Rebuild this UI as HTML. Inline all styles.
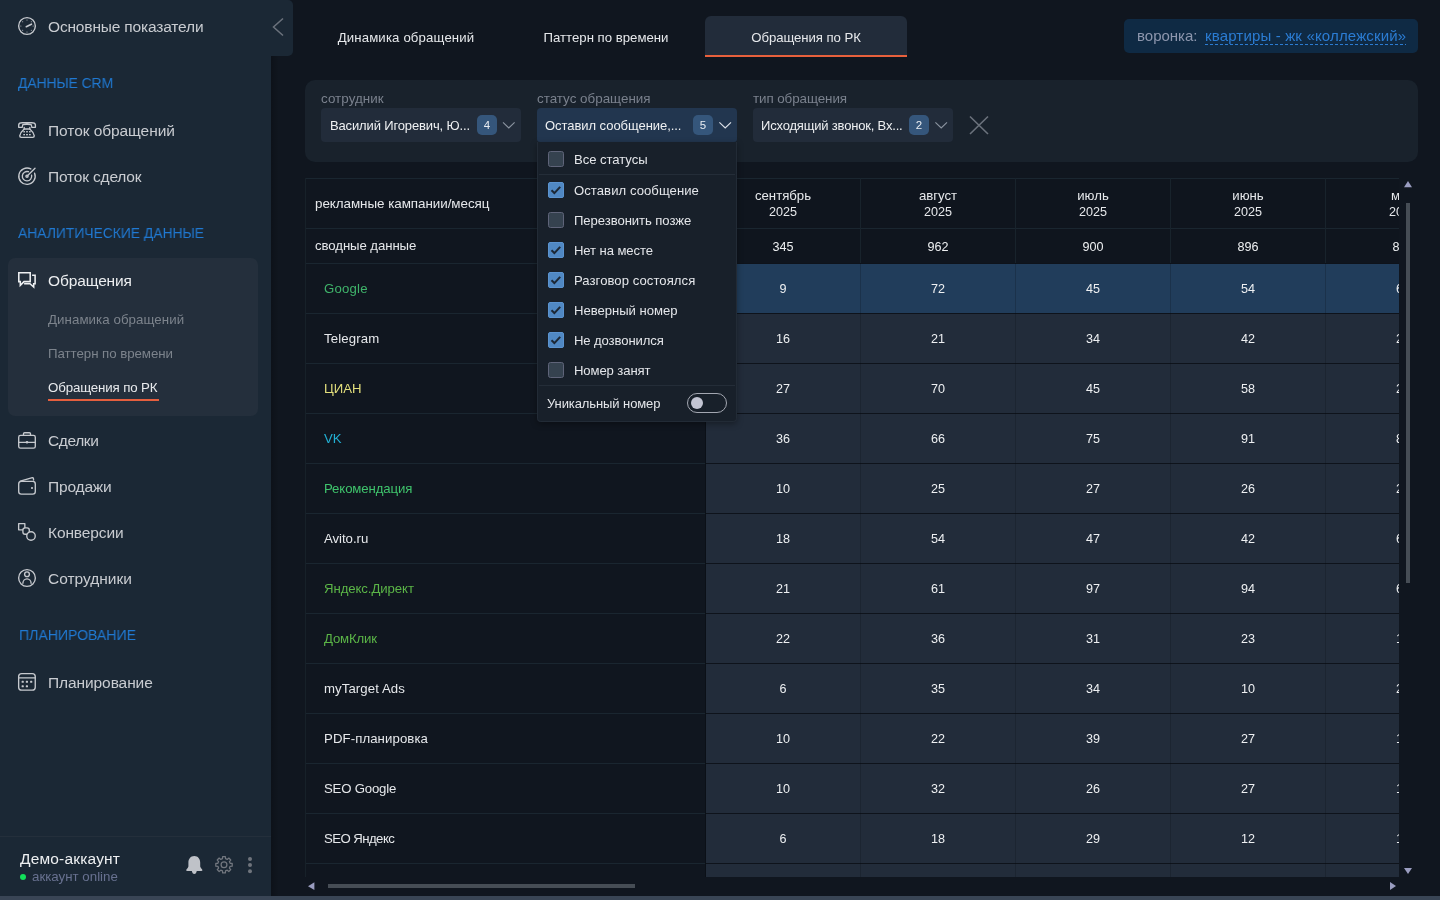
<!DOCTYPE html>
<html><head><meta charset="utf-8"><title>Обращения по РК</title>
<style>
html,body{margin:0;padding:0;}
body{width:1440px;height:900px;overflow:hidden;background:#10161f;font-family:"Liberation Sans", sans-serif;position:relative;}
.t{position:absolute;white-space:nowrap;line-height:1;will-change:transform;}
.r{position:absolute;}
</style></head><body>
<div class="r" style="left:0px;top:0px;width:271px;height:900px;background:#1b2835;"></div>
<div class="r" style="left:0px;top:0px;width:293px;height:56px;background:#1b2835;border-radius:0 5px 5px 0;"></div>
<div class="r" style="left:0px;top:836px;width:271px;height:1px;background:#242f3b;"></div>
<div class="r" style="left:271px;top:56px;width:8px;height:844px;background:linear-gradient(to right, rgba(0,0,0,0.2), rgba(0,0,0,0));"></div>
<div class="t" style="left:48.00px;top:19px;font-size:15.5px;color:#c9ccd1;letter-spacing:-0.167px;">Основные показатели</div>
<div class="t" style="left:18.00px;top:75px;font-size:15px;color:#2079d2;transform:scaleX(0.919);transform-origin:0 0;">ДАННЫЕ CRM</div>
<div class="t" style="left:48.00px;top:123px;font-size:15.5px;color:#c9ccd1;letter-spacing:-0.071px;">Поток обращений</div>
<div class="t" style="left:48.00px;top:169px;font-size:15.5px;color:#c9ccd1;letter-spacing:-0.182px;">Поток сделок</div>
<div class="t" style="left:18.00px;top:225px;font-size:15px;color:#2079d2;transform:scaleX(0.924);transform-origin:0 0;">АНАЛИТИЧЕСКИЕ ДАННЫЕ</div>
<div class="r" style="left:8px;top:258px;width:250px;height:158px;background:#242f3c;border-radius:7px;"></div>
<div class="t" style="left:48.00px;top:273px;font-size:15.5px;color:#eceef0;letter-spacing:-0.125px;">Обращения</div>
<div class="t" style="left:48.00px;top:313px;font-size:13.3px;color:#7c838c;letter-spacing:0.059px;">Динамика обращений</div>
<div class="t" style="left:48.00px;top:347px;font-size:13.3px;color:#7c838c;letter-spacing:-0.059px;">Паттерн по времени</div>
<div class="t" style="left:48.00px;top:381px;font-size:13.3px;color:#e8eaed;letter-spacing:-0.143px;">Обращения по РК</div>
<div class="r" style="left:48px;top:399px;width:111px;height:1.5px;background:#e65f3e;"></div>
<div class="t" style="left:48.00px;top:433px;font-size:15.5px;color:#c9ccd1;letter-spacing:-0.4px;">Сделки</div>
<div class="t" style="left:48.00px;top:479px;font-size:15.5px;color:#c9ccd1;letter-spacing:-0.167px;">Продажи</div>
<div class="t" style="left:48.00px;top:525px;font-size:15.5px;color:#c9ccd1;letter-spacing:-0.125px;">Конверсии</div>
<div class="t" style="left:48.00px;top:571px;font-size:15.5px;color:#c9ccd1;">Сотрудники</div>
<div class="t" style="left:18.50px;top:627px;font-size:15px;color:#2079d2;transform:scaleX(0.938);transform-origin:0 0;">ПЛАНИРОВАНИЕ</div>
<div class="t" style="left:48.00px;top:675px;font-size:15.5px;color:#c9ccd1;letter-spacing:-0.091px;">Планирование</div>
<div class="t" style="left:19.50px;top:851px;font-size:15.5px;color:#eef0f2;letter-spacing:0.182px;">Демо-аккаунт</div>
<div class="t" style="left:32.00px;top:870px;font-size:13.3px;color:#687190;">аккаунт online</div>
<div class="r" style="left:19.8px;top:873.8px;width:6.4px;height:6.4px;border-radius:50%;background:#12e05a;"></div>
<svg class="r" style="left:0;top:0" width="300" height="900" viewBox="0 0 300 900">
<g fill="none" stroke="#c6c9ce" stroke-width="1.35" stroke-linecap="round" stroke-linejoin="round">
 <circle cx="27" cy="26" r="8.35"/>
 <path d="M26.3 26.7 L31.4 24.2" stroke-width="1.7"/>
</g>
<g fill="#c6c9ce"><circle cx="27" cy="19.9" r=".5"/><circle cx="33.1" cy="26" r=".5"/><circle cx="20.9" cy="26" r=".5"/><circle cx="22.7" cy="21.7" r=".5"/><circle cx="31.3" cy="21.7" r=".5"/><circle cx="22.7" cy="30.3" r=".5"/><circle cx="31.3" cy="30.3" r=".5"/><circle cx="27" cy="32.1" r=".5"/></g>
<path fill="none" stroke="#c6c9ce" stroke-width="1.35" stroke-linecap="round" stroke-linejoin="round" d="M18.7 127.3 V124.6 Q19.2 122.7 22.2 122.7 H31.8 Q34.8 122.7 35.4 124.6 V127.3 H31.9 L31.2 124.6 Q27 123.8 22.8 124.6 L22.2 127.3 Z"/>
<path fill="none" stroke="#c6c9ce" stroke-width="1.35" stroke-linecap="round" stroke-linejoin="round" d="M24.2 127.4 V129 Q20.2 132.5 19.7 135.8 Q19.7 137.3 21.2 137.3 H32.8 Q34.3 137.3 34.3 135.8 Q33.8 132.5 29.8 129 V127.4"/>
<path fill="none" stroke="#c6c9ce" stroke-width="1.35" stroke-linecap="round" stroke-linejoin="round" d="M24.2 129 H29.8"/>
<g fill="#c6c9ce"><rect x="23.3" y="131.1" width="1.7" height="1.3"/><rect x="26.1" y="131.1" width="1.8" height="1.3"/><rect x="29" y="131.1" width="1.7" height="1.3"/><rect x="23.3" y="134" width="1.7" height="1.3"/><rect x="26.1" y="134" width="1.8" height="1.3"/><rect x="29" y="134" width="1.7" height="1.3"/></g>
<g fill="none" stroke="#c6c9ce" stroke-width="1.35" stroke-linecap="round" stroke-linejoin="round" stroke-width="1.5">
 <path d="M34.60 173.13 A8.2 8.2 0 1 1 30.85 168.96"/>
 <path d="M31.60 175.22 A4.7 4.7 0 1 1 28.45 171.73"/>
 <circle cx="27" cy="176.2" r="1.1"/>
 <path d="M27.2 176 L35 168.2"/>
</g>
<g fill="none" stroke="#eef0f2" stroke-width="1.55" stroke-linejoin="miter" stroke-linecap="butt">
 <path d="M24 281.6 H30.2 V272.8 H18.8 V281.6 H20.3 V285.3 Z"/>
 <path d="M32.1 275.2 H35.1 V283.7 H33.7 V287.1 L30 283.7 H24.1"/>
</g>
<g fill="none" stroke="#c6c9ce" stroke-width="1.35" stroke-linecap="round" stroke-linejoin="round">
 <rect x="18.7" y="435.4" width="16.6" height="12.8" rx="1.8"/>
 <path d="M23.5 435.2 V433.8 Q23.5 432.7 24.6 432.7 H29.4 Q30.5 432.7 30.5 433.8 V435.2"/>
 <path d="M18.7 442.3 H35.3"/>
</g>
<circle cx="27" cy="442.3" r="1.3" fill="#c6c9ce"/>
<g fill="none" stroke="#c6c9ce" stroke-width="1.35" stroke-linecap="round" stroke-linejoin="round">
 <rect x="18.7" y="481.3" width="16.6" height="12.8" rx="2.6"/>
 <path d="M20.3 481.2 L32.4 477.6 Q33.2 477.5 33.4 478.4 L33.6 480"/>
</g>
<rect x="31.1" y="487.1" width="1.8" height="1.8" fill="#c6c9ce"/>
<g fill="#1b2835" stroke="#c6c9ce" stroke-width="1.35" stroke-linejoin="round">
 <rect x="18.65" y="523.6" width="6.2" height="6.2"/>
 <rect x="22.9" y="527.9" width="6.4" height="6.3" rx="2.2"/>
 <circle cx="31" cy="536" r="4.25"/>
</g>
<g fill="none" stroke="#c6c9ce" stroke-width="1.35" stroke-linecap="round" stroke-linejoin="round">
 <circle cx="27" cy="578" r="8.35"/>
 <circle cx="27" cy="574.3" r="2.4"/>
 <path d="M22.9 583.2 A4.1 4.4 0 0 1 31.1 583.2"/>
</g>
<g fill="none" stroke="#c6c9ce" stroke-width="1.35" stroke-linecap="round" stroke-linejoin="round">
 <rect x="18.65" y="673.6" width="16.6" height="16.6" rx="3"/>
 <path d="M18.7 677.8 H35.3"/>
</g>
<g fill="#c6c9ce"><rect x="21.6" y="680.8" width="2.2" height="2" rx=".6"/><rect x="25.8" y="680.8" width="2.2" height="2" rx=".6"/><rect x="30.1" y="680.8" width="2.2" height="2" rx=".6"/><rect x="21.6" y="685.3" width="2.2" height="2" rx=".6"/><rect x="25.8" y="685.3" width="2.2" height="2" rx=".6"/></g>
<path d="M283 18.5 L273.5 27 L283 35.5" fill="none" stroke="#6b727c" stroke-width="1.5"/>
<path fill="#bfc2c8" d="M194.3 855.9 C190.6 855.9 188.4 858.8 188.4 862.6 V866.6 Q188 868.2 186.4 869.4 Q185.6 870.9 187.4 870.9 H201.2 Q203 870.9 202.2 869.4 Q200.6 868.2 200.2 866.6 V862.6 C200.2 858.8 198 855.9 194.3 855.9 Z M191.7 870.5 Q192.4 874.1 194.3 874.1 Q196.2 874.1 196.9 870.5 Z"/>
<g fill="none" stroke="#72777f" stroke-width="1.25" stroke-linejoin="round">
 <path d="M222.48 858.69 L222.64 856.61 L225.36 856.61 L225.52 858.69 L227.25 859.40 L228.83 858.05 L230.75 859.97 L229.40 861.55 L230.11 863.28 L232.19 863.44 L232.19 866.16 L230.11 866.32 L229.40 868.05 L230.75 869.63 L228.83 871.55 L227.25 870.20 L225.52 870.91 L225.36 872.99 L222.64 872.99 L222.48 870.91 L220.75 870.20 L219.17 871.55 L217.25 869.63 L218.60 868.05 L217.89 866.32 L215.81 866.16 L215.81 863.44 L217.89 863.28 L218.60 861.55 L217.25 859.97 L219.17 858.05 L220.75 859.40 Z"/>
 <circle cx="224" cy="864.8" r="2.9"/>
</g>
<g fill="#6f747c"><circle cx="250" cy="858.9" r="2"/><circle cx="250" cy="865.1" r="2"/><circle cx="250" cy="871.2" r="2"/></g>
</svg>
<div class="r" style="left:705px;top:16px;width:202px;height:41px;background:#222c3a;border-radius:6px 6px 0 0;"></div>
<div class="r" style="left:705px;top:55px;width:202px;height:2px;background:#e8603c;"></div>
<div class="t" style="left:306.00px;width:200px;text-align:center;top:31px;font-size:13.2px;color:#e6e8eb;letter-spacing:0.147px;">Динамика обращений</div>
<div class="t" style="left:506.00px;width:200px;text-align:center;top:31px;font-size:13.2px;color:#e6e8eb;">Паттерн по времени</div>
<div class="t" style="left:706.00px;width:200px;text-align:center;top:31px;font-size:13.2px;color:#e6e8eb;letter-spacing:-0.071px;">Обращения по РК</div>
<div class="r" style="left:1124px;top:19px;width:294px;height:34px;background:#0f2a44;border-radius:5px;"></div>
<div class="t" style="left:1137.00px;top:28px;font-size:15px;color:#8d96ad;">воронка:</div>
<div class="t" style="left:1204.50px;top:28px;font-size:15px;color:#2b7cd3;letter-spacing:0.16px;">квартиры - жк «коллежский»</div>
<div class="r" style="left:1204.5px;top:44px;width:201.5px;height:1px;background:repeating-linear-gradient(to right, #2b7cd3 0 3px, transparent 3px 5px);"></div>
<div class="r" style="left:305px;top:80px;width:1113px;height:82px;background:#19222c;border-radius:10px;"></div>
<div class="t" style="left:321.00px;top:92px;font-size:13.4px;color:#7a818d;letter-spacing:0.062px;">сотрудник</div>
<div class="t" style="left:537.00px;top:92px;font-size:13.4px;color:#7a818d;">статус обращения</div>
<div class="t" style="left:753.00px;top:92px;font-size:13.4px;color:#7a818d;letter-spacing:-0.083px;">тип обращения</div>
<div class="r" style="left:321px;top:108px;width:200px;height:34px;background:#222c3a;border-radius:4px;"></div>
<div class="r" style="left:537px;top:108px;width:200px;height:34px;background:#22364f;border-radius:4px 4px 3px 3px;"></div>
<div class="r" style="left:753px;top:108px;width:200px;height:34px;background:#222c3a;border-radius:4px;"></div>
<div class="t" style="left:329.70px;top:119px;font-size:13px;color:#eef0f2;letter-spacing:-0.143px;">Василий Игоревич, Ю...</div>
<div class="t" style="left:545.20px;top:119px;font-size:13px;color:#eef0f2;letter-spacing:-0.05px;">Оставил сообщение,...</div>
<div class="t" style="left:761.30px;top:119px;font-size:13px;color:#eef0f2;letter-spacing:-0.182px;">Исходящий звонок, Вх...</div>
<div class="r" style="left:476.5px;top:115px;width:20px;height:20px;background:#35567b;border-radius:5px;"></div>
<div class="t" style="left:476.50px;width:20px;text-align:center;top:120px;font-size:11.5px;color:#e8ecf2;">4</div>
<div class="r" style="left:693.3px;top:115px;width:20px;height:20px;background:#35567b;border-radius:5px;"></div>
<div class="t" style="left:693.30px;width:20px;text-align:center;top:120px;font-size:11.5px;color:#e8ecf2;">5</div>
<div class="r" style="left:909.2px;top:115px;width:20px;height:20px;background:#35567b;border-radius:5px;"></div>
<div class="t" style="left:909.20px;width:20px;text-align:center;top:120px;font-size:11.5px;color:#e8ecf2;">2</div>
<svg class="r" style="left:0;top:0" width="1440" height="160" viewBox="0 0 1440 160">
<path d="M503 122.3 L508.8 128 L514.6 122.3" fill="none" stroke="#8b94a0" stroke-width="1.1"/>
<path d="M719.4 122.3 L725.2 128 L731 122.3" fill="none" stroke="#dfe3ea" stroke-width="1.1"/>
<path d="M935.4 122.3 L941.2 128 L947 122.3" fill="none" stroke="#8b94a0" stroke-width="1.1"/>
<path d="M970 116.5 L988 134 M988 116.5 L970 134" fill="none" stroke="#6b727c" stroke-width="1.6"/>
</svg>
<div class="r" style="left:305px;top:178px;width:1094px;height:699px;overflow:hidden;">
<div class="r" style="left:0px;top:0px;width:1200px;height:85px;background:#0f151e;"></div>
<div class="r" style="left:0px;top:0px;width:400px;height:800px;background:#10161f;"></div>
<div class="r" style="left:401px;top:85px;width:800px;height:50px;background:#213d5b;"></div>
<div class="r" style="left:401px;top:85px;width:800px;height:1px;background:#0e131b;"></div>
<div class="r" style="left:0px;top:85px;width:400px;height:1px;background:#1a2630;"></div>
<div class="t" style="left:19.00px;top:104px;font-size:13.2px;color:#3fb36a;letter-spacing:0.2px;">Google</div>
<div class="t" style="left:428.00px;width:100px;text-align:center;top:105px;font-size:12.6px;color:#eef0f2;">9</div>
<div class="t" style="left:583.00px;width:100px;text-align:center;top:105px;font-size:12.6px;color:#eef0f2;">72</div>
<div class="t" style="left:738.00px;width:100px;text-align:center;top:105px;font-size:12.6px;color:#eef0f2;">45</div>
<div class="t" style="left:893.00px;width:100px;text-align:center;top:105px;font-size:12.6px;color:#eef0f2;">54</div>
<div class="t" style="left:1048.00px;width:100px;text-align:center;top:105px;font-size:12.6px;color:#eef0f2;">61</div>
<div class="r" style="left:401px;top:135px;width:800px;height:50px;background:#222c3a;"></div>
<div class="r" style="left:401px;top:135px;width:800px;height:1px;background:#0e131b;"></div>
<div class="r" style="left:0px;top:135px;width:400px;height:1px;background:#1a2630;"></div>
<div class="t" style="left:19.00px;top:154px;font-size:13.2px;color:#e6e8eb;letter-spacing:0.143px;">Telegram</div>
<div class="t" style="left:428.00px;width:100px;text-align:center;top:155px;font-size:12.6px;color:#eef0f2;">16</div>
<div class="t" style="left:583.00px;width:100px;text-align:center;top:155px;font-size:12.6px;color:#eef0f2;">21</div>
<div class="t" style="left:738.00px;width:100px;text-align:center;top:155px;font-size:12.6px;color:#eef0f2;">34</div>
<div class="t" style="left:893.00px;width:100px;text-align:center;top:155px;font-size:12.6px;color:#eef0f2;">42</div>
<div class="t" style="left:1048.00px;width:100px;text-align:center;top:155px;font-size:12.6px;color:#eef0f2;">24</div>
<div class="r" style="left:401px;top:185px;width:800px;height:50px;background:#222c3a;"></div>
<div class="r" style="left:401px;top:185px;width:800px;height:1px;background:#0e131b;"></div>
<div class="r" style="left:0px;top:185px;width:400px;height:1px;background:#1a2630;"></div>
<div class="t" style="left:19.00px;top:204px;font-size:13.2px;color:#e3df7c;">ЦИАН</div>
<div class="t" style="left:428.00px;width:100px;text-align:center;top:205px;font-size:12.6px;color:#eef0f2;">27</div>
<div class="t" style="left:583.00px;width:100px;text-align:center;top:205px;font-size:12.6px;color:#eef0f2;">70</div>
<div class="t" style="left:738.00px;width:100px;text-align:center;top:205px;font-size:12.6px;color:#eef0f2;">45</div>
<div class="t" style="left:893.00px;width:100px;text-align:center;top:205px;font-size:12.6px;color:#eef0f2;">58</div>
<div class="t" style="left:1048.00px;width:100px;text-align:center;top:205px;font-size:12.6px;color:#eef0f2;">23</div>
<div class="r" style="left:401px;top:235px;width:800px;height:50px;background:#222c3a;"></div>
<div class="r" style="left:401px;top:235px;width:800px;height:1px;background:#0e131b;"></div>
<div class="r" style="left:0px;top:235px;width:400px;height:1px;background:#1a2630;"></div>
<div class="t" style="left:19.00px;top:254px;font-size:13.2px;color:#22b0d4;">VK</div>
<div class="t" style="left:428.00px;width:100px;text-align:center;top:255px;font-size:12.6px;color:#eef0f2;">36</div>
<div class="t" style="left:583.00px;width:100px;text-align:center;top:255px;font-size:12.6px;color:#eef0f2;">66</div>
<div class="t" style="left:738.00px;width:100px;text-align:center;top:255px;font-size:12.6px;color:#eef0f2;">75</div>
<div class="t" style="left:893.00px;width:100px;text-align:center;top:255px;font-size:12.6px;color:#eef0f2;">91</div>
<div class="t" style="left:1048.00px;width:100px;text-align:center;top:255px;font-size:12.6px;color:#eef0f2;">84</div>
<div class="r" style="left:401px;top:285px;width:800px;height:50px;background:#222c3a;"></div>
<div class="r" style="left:401px;top:285px;width:800px;height:1px;background:#0e131b;"></div>
<div class="r" style="left:0px;top:285px;width:400px;height:1px;background:#1a2630;"></div>
<div class="t" style="left:19.00px;top:304px;font-size:13.2px;color:#3fc46c;letter-spacing:-0.114px;">Рекомендация</div>
<div class="t" style="left:428.00px;width:100px;text-align:center;top:305px;font-size:12.6px;color:#eef0f2;">10</div>
<div class="t" style="left:583.00px;width:100px;text-align:center;top:305px;font-size:12.6px;color:#eef0f2;">25</div>
<div class="t" style="left:738.00px;width:100px;text-align:center;top:305px;font-size:12.6px;color:#eef0f2;">27</div>
<div class="t" style="left:893.00px;width:100px;text-align:center;top:305px;font-size:12.6px;color:#eef0f2;">26</div>
<div class="t" style="left:1048.00px;width:100px;text-align:center;top:305px;font-size:12.6px;color:#eef0f2;">21</div>
<div class="r" style="left:401px;top:335px;width:800px;height:50px;background:#222c3a;"></div>
<div class="r" style="left:401px;top:335px;width:800px;height:1px;background:#0e131b;"></div>
<div class="r" style="left:0px;top:335px;width:400px;height:1px;background:#1a2630;"></div>
<div class="t" style="left:19.00px;top:354px;font-size:13.2px;color:#e6e8eb;letter-spacing:-0.036px;">Avito.ru</div>
<div class="t" style="left:428.00px;width:100px;text-align:center;top:355px;font-size:12.6px;color:#eef0f2;">18</div>
<div class="t" style="left:583.00px;width:100px;text-align:center;top:355px;font-size:12.6px;color:#eef0f2;">54</div>
<div class="t" style="left:738.00px;width:100px;text-align:center;top:355px;font-size:12.6px;color:#eef0f2;">47</div>
<div class="t" style="left:893.00px;width:100px;text-align:center;top:355px;font-size:12.6px;color:#eef0f2;">42</div>
<div class="t" style="left:1048.00px;width:100px;text-align:center;top:355px;font-size:12.6px;color:#eef0f2;">63</div>
<div class="r" style="left:401px;top:385px;width:800px;height:50px;background:#222c3a;"></div>
<div class="r" style="left:401px;top:385px;width:800px;height:1px;background:#0e131b;"></div>
<div class="r" style="left:0px;top:385px;width:400px;height:1px;background:#1a2630;"></div>
<div class="t" style="left:19.00px;top:404px;font-size:13.2px;color:#5bb547;letter-spacing:-0.083px;">Яндекс.Директ</div>
<div class="t" style="left:428.00px;width:100px;text-align:center;top:405px;font-size:12.6px;color:#eef0f2;">21</div>
<div class="t" style="left:583.00px;width:100px;text-align:center;top:405px;font-size:12.6px;color:#eef0f2;">61</div>
<div class="t" style="left:738.00px;width:100px;text-align:center;top:405px;font-size:12.6px;color:#eef0f2;">97</div>
<div class="t" style="left:893.00px;width:100px;text-align:center;top:405px;font-size:12.6px;color:#eef0f2;">94</div>
<div class="t" style="left:1048.00px;width:100px;text-align:center;top:405px;font-size:12.6px;color:#eef0f2;">68</div>
<div class="r" style="left:401px;top:435px;width:800px;height:50px;background:#222c3a;"></div>
<div class="r" style="left:401px;top:435px;width:800px;height:1px;background:#0e131b;"></div>
<div class="r" style="left:0px;top:435px;width:400px;height:1px;background:#1a2630;"></div>
<div class="t" style="left:19.00px;top:454px;font-size:13.2px;color:#5bb547;letter-spacing:-0.167px;">ДомКлик</div>
<div class="t" style="left:428.00px;width:100px;text-align:center;top:455px;font-size:12.6px;color:#eef0f2;">22</div>
<div class="t" style="left:583.00px;width:100px;text-align:center;top:455px;font-size:12.6px;color:#eef0f2;">36</div>
<div class="t" style="left:738.00px;width:100px;text-align:center;top:455px;font-size:12.6px;color:#eef0f2;">31</div>
<div class="t" style="left:893.00px;width:100px;text-align:center;top:455px;font-size:12.6px;color:#eef0f2;">23</div>
<div class="t" style="left:1048.00px;width:100px;text-align:center;top:455px;font-size:12.6px;color:#eef0f2;">17</div>
<div class="r" style="left:401px;top:485px;width:800px;height:50px;background:#222c3a;"></div>
<div class="r" style="left:401px;top:485px;width:800px;height:1px;background:#0e131b;"></div>
<div class="r" style="left:0px;top:485px;width:400px;height:1px;background:#1a2630;"></div>
<div class="t" style="left:19.00px;top:504px;font-size:13.2px;color:#e6e8eb;letter-spacing:0.091px;">myTarget Ads</div>
<div class="t" style="left:428.00px;width:100px;text-align:center;top:505px;font-size:12.6px;color:#eef0f2;">6</div>
<div class="t" style="left:583.00px;width:100px;text-align:center;top:505px;font-size:12.6px;color:#eef0f2;">35</div>
<div class="t" style="left:738.00px;width:100px;text-align:center;top:505px;font-size:12.6px;color:#eef0f2;">34</div>
<div class="t" style="left:893.00px;width:100px;text-align:center;top:505px;font-size:12.6px;color:#eef0f2;">10</div>
<div class="t" style="left:1048.00px;width:100px;text-align:center;top:505px;font-size:12.6px;color:#eef0f2;">21</div>
<div class="r" style="left:401px;top:535px;width:800px;height:50px;background:#222c3a;"></div>
<div class="r" style="left:401px;top:535px;width:800px;height:1px;background:#0e131b;"></div>
<div class="r" style="left:0px;top:535px;width:400px;height:1px;background:#1a2630;"></div>
<div class="t" style="left:19.00px;top:554px;font-size:13.2px;color:#e6e8eb;letter-spacing:0.096px;">PDF-планировка</div>
<div class="t" style="left:428.00px;width:100px;text-align:center;top:555px;font-size:12.6px;color:#eef0f2;">10</div>
<div class="t" style="left:583.00px;width:100px;text-align:center;top:555px;font-size:12.6px;color:#eef0f2;">22</div>
<div class="t" style="left:738.00px;width:100px;text-align:center;top:555px;font-size:12.6px;color:#eef0f2;">39</div>
<div class="t" style="left:893.00px;width:100px;text-align:center;top:555px;font-size:12.6px;color:#eef0f2;">27</div>
<div class="t" style="left:1048.00px;width:100px;text-align:center;top:555px;font-size:12.6px;color:#eef0f2;">14</div>
<div class="r" style="left:401px;top:585px;width:800px;height:50px;background:#222c3a;"></div>
<div class="r" style="left:401px;top:585px;width:800px;height:1px;background:#0e131b;"></div>
<div class="r" style="left:0px;top:585px;width:400px;height:1px;background:#1a2630;"></div>
<div class="t" style="left:19.00px;top:604px;font-size:13.2px;color:#e6e8eb;letter-spacing:-0.194px;">SEO Google</div>
<div class="t" style="left:428.00px;width:100px;text-align:center;top:605px;font-size:12.6px;color:#eef0f2;">10</div>
<div class="t" style="left:583.00px;width:100px;text-align:center;top:605px;font-size:12.6px;color:#eef0f2;">32</div>
<div class="t" style="left:738.00px;width:100px;text-align:center;top:605px;font-size:12.6px;color:#eef0f2;">26</div>
<div class="t" style="left:893.00px;width:100px;text-align:center;top:605px;font-size:12.6px;color:#eef0f2;">27</div>
<div class="t" style="left:1048.00px;width:100px;text-align:center;top:605px;font-size:12.6px;color:#eef0f2;">12</div>
<div class="r" style="left:401px;top:635px;width:800px;height:50px;background:#222c3a;"></div>
<div class="r" style="left:401px;top:635px;width:800px;height:1px;background:#0e131b;"></div>
<div class="r" style="left:0px;top:635px;width:400px;height:1px;background:#1a2630;"></div>
<div class="t" style="left:19.00px;top:654px;font-size:13.2px;color:#e6e8eb;letter-spacing:-0.556px;">SEO Яндекс</div>
<div class="t" style="left:428.00px;width:100px;text-align:center;top:655px;font-size:12.6px;color:#eef0f2;">6</div>
<div class="t" style="left:583.00px;width:100px;text-align:center;top:655px;font-size:12.6px;color:#eef0f2;">18</div>
<div class="t" style="left:738.00px;width:100px;text-align:center;top:655px;font-size:12.6px;color:#eef0f2;">29</div>
<div class="t" style="left:893.00px;width:100px;text-align:center;top:655px;font-size:12.6px;color:#eef0f2;">12</div>
<div class="t" style="left:1048.00px;width:100px;text-align:center;top:655px;font-size:12.6px;color:#eef0f2;">15</div>
<div class="r" style="left:401px;top:685px;width:800px;height:50px;background:#222c3a;"></div>
<div class="r" style="left:401px;top:685px;width:800px;height:1px;background:#0e131b;"></div>
<div class="r" style="left:0px;top:685px;width:400px;height:1px;background:#1a2630;"></div>
<div class="t" style="left:19.00px;top:704px;font-size:13.2px;color:#e6e8eb;letter-spacing:-0.429px;">SEO Bing</div>
<div class="t" style="left:428.00px;width:100px;text-align:center;top:705px;font-size:12.6px;color:#eef0f2;">3</div>
<div class="t" style="left:583.00px;width:100px;text-align:center;top:705px;font-size:12.6px;color:#eef0f2;">8</div>
<div class="t" style="left:738.00px;width:100px;text-align:center;top:705px;font-size:12.6px;color:#eef0f2;">9</div>
<div class="t" style="left:893.00px;width:100px;text-align:center;top:705px;font-size:12.6px;color:#eef0f2;">7</div>
<div class="t" style="left:1048.00px;width:100px;text-align:center;top:705px;font-size:12.6px;color:#eef0f2;">5</div>
<div class="r" style="left:0px;top:0px;width:1100px;height:1px;background:#1a2630;"></div>
<div class="r" style="left:0px;top:50px;width:1100px;height:1px;background:#1a2630;"></div>
<div class="r" style="left:0px;top:0px;width:1px;height:800px;background:#172129;"></div>
<div class="r" style="left:400px;top:0px;width:1px;height:800px;background:#0b1017;"></div>
<div class="r" style="left:555px;top:0px;width:1px;height:85px;background:#18232c;"></div>
<div class="r" style="left:555px;top:85px;width:1px;height:800px;background:rgba(10,14,20,0.22);"></div>
<div class="r" style="left:710px;top:0px;width:1px;height:85px;background:#18232c;"></div>
<div class="r" style="left:710px;top:85px;width:1px;height:800px;background:rgba(10,14,20,0.22);"></div>
<div class="r" style="left:865px;top:0px;width:1px;height:85px;background:#18232c;"></div>
<div class="r" style="left:865px;top:85px;width:1px;height:800px;background:rgba(10,14,20,0.22);"></div>
<div class="r" style="left:1020px;top:0px;width:1px;height:85px;background:#18232c;"></div>
<div class="r" style="left:1020px;top:85px;width:1px;height:800px;background:rgba(10,14,20,0.22);"></div>
<div class="t" style="left:9.80px;top:19px;font-size:13.4px;color:#e6e8eb;letter-spacing:-0.043px;">рекламные кампании/месяц</div>
<div class="t" style="left:9.80px;top:61px;font-size:13.2px;color:#e6e8eb;letter-spacing:-0.077px;">сводные данные</div>
<div class="t" style="left:418.00px;width:120px;text-align:center;top:11px;font-size:13.2px;color:#e6e8eb;">сентябрь</div>
<div class="t" style="left:418.00px;width:120px;text-align:center;top:28px;font-size:12.6px;color:#e6e8eb;">2025</div>
<div class="t" style="left:418.00px;width:120px;text-align:center;top:63px;font-size:12.6px;color:#eef0f2;">345</div>
<div class="t" style="left:573.00px;width:120px;text-align:center;top:11px;font-size:13.2px;color:#e6e8eb;">август</div>
<div class="t" style="left:573.00px;width:120px;text-align:center;top:28px;font-size:12.6px;color:#e6e8eb;">2025</div>
<div class="t" style="left:573.00px;width:120px;text-align:center;top:63px;font-size:12.6px;color:#eef0f2;">962</div>
<div class="t" style="left:728.00px;width:120px;text-align:center;top:11px;font-size:13.2px;color:#e6e8eb;">июль</div>
<div class="t" style="left:728.00px;width:120px;text-align:center;top:28px;font-size:12.6px;color:#e6e8eb;">2025</div>
<div class="t" style="left:728.00px;width:120px;text-align:center;top:63px;font-size:12.6px;color:#eef0f2;">900</div>
<div class="t" style="left:883.00px;width:120px;text-align:center;top:11px;font-size:13.2px;color:#e6e8eb;">июнь</div>
<div class="t" style="left:883.00px;width:120px;text-align:center;top:28px;font-size:12.6px;color:#e6e8eb;">2025</div>
<div class="t" style="left:883.00px;width:120px;text-align:center;top:63px;font-size:12.6px;color:#eef0f2;">896</div>
<div class="t" style="left:1038.00px;width:120px;text-align:center;top:11px;font-size:13.2px;color:#e6e8eb;">май</div>
<div class="t" style="left:1038.00px;width:120px;text-align:center;top:28px;font-size:12.6px;color:#e6e8eb;">2025</div>
<div class="t" style="left:1038.00px;width:120px;text-align:center;top:63px;font-size:12.6px;color:#eef0f2;">854</div>
</div>
<div class="r" style="left:537px;top:142px;width:200px;height:280px;background:#18202a;border:1px solid #222b36;border-top:none;box-sizing:border-box;border-radius:0 0 4px 4px;box-shadow:0 2px 6px rgba(0,0,0,.35);"></div>
<div class="r" style="left:539px;top:174px;width:196px;height:1px;background:#242d38;"></div>
<div class="r" style="left:539px;top:385px;width:196px;height:1px;background:#242d38;"></div>
<div class="r" style="left:548px;top:151px;width:16px;height:16px;background:#35424f;border:1px solid #5f6479;box-sizing:border-box;border-radius:2.5px;"></div>
<div class="t" style="left:573.50px;top:153px;font-size:13.1px;color:#e4e6ea;letter-spacing:-0.05px;">Все статусы</div>
<div class="r" style="left:548px;top:182px;width:16px;height:16px;background:#5088c3;border:1px solid #5b93cf;box-sizing:border-box;border-radius:2px;"></div>
<svg class="r" style="left:548px;top:182px" width="16" height="16" viewBox="0 0 16 16"><path d="M3.5 8.3 L6.4 11.1 L12.2 4.9" fill="none" stroke="#1c2836" stroke-width="2.1"/></svg>
<div class="t" style="left:573.50px;top:184px;font-size:13.1px;color:#e4e6ea;letter-spacing:0.062px;">Оставил сообщение</div>
<div class="r" style="left:548px;top:212px;width:16px;height:16px;background:#35424f;border:1px solid #5f6479;box-sizing:border-box;border-radius:2.5px;"></div>
<div class="t" style="left:573.50px;top:214px;font-size:13.1px;color:#e4e6ea;letter-spacing:-0.062px;">Перезвонить позже</div>
<div class="r" style="left:548px;top:242px;width:16px;height:16px;background:#5088c3;border:1px solid #5b93cf;box-sizing:border-box;border-radius:2px;"></div>
<svg class="r" style="left:548px;top:242px" width="16" height="16" viewBox="0 0 16 16"><path d="M3.5 8.3 L6.4 11.1 L12.2 4.9" fill="none" stroke="#1c2836" stroke-width="2.1"/></svg>
<div class="t" style="left:573.50px;top:244px;font-size:13.1px;color:#e4e6ea;letter-spacing:-0.091px;">Нет на месте</div>
<div class="r" style="left:548px;top:272px;width:16px;height:16px;background:#5088c3;border:1px solid #5b93cf;box-sizing:border-box;border-radius:2px;"></div>
<svg class="r" style="left:548px;top:272px" width="16" height="16" viewBox="0 0 16 16"><path d="M3.5 8.3 L6.4 11.1 L12.2 4.9" fill="none" stroke="#1c2836" stroke-width="2.1"/></svg>
<div class="t" style="left:573.50px;top:274px;font-size:13.1px;color:#e4e6ea;letter-spacing:0.059px;">Разговор состоялся</div>
<div class="r" style="left:548px;top:302px;width:16px;height:16px;background:#5088c3;border:1px solid #5b93cf;box-sizing:border-box;border-radius:2px;"></div>
<svg class="r" style="left:548px;top:302px" width="16" height="16" viewBox="0 0 16 16"><path d="M3.5 8.3 L6.4 11.1 L12.2 4.9" fill="none" stroke="#1c2836" stroke-width="2.1"/></svg>
<div class="t" style="left:573.50px;top:304px;font-size:13.1px;color:#e4e6ea;letter-spacing:-0.023px;">Неверный номер</div>
<div class="r" style="left:548px;top:332px;width:16px;height:16px;background:#5088c3;border:1px solid #5b93cf;box-sizing:border-box;border-radius:2px;"></div>
<svg class="r" style="left:548px;top:332px" width="16" height="16" viewBox="0 0 16 16"><path d="M3.5 8.3 L6.4 11.1 L12.2 4.9" fill="none" stroke="#1c2836" stroke-width="2.1"/></svg>
<div class="t" style="left:573.50px;top:334px;font-size:13.1px;color:#e4e6ea;letter-spacing:-0.108px;">Не дозвонился</div>
<div class="r" style="left:548px;top:362px;width:16px;height:16px;background:#35424f;border:1px solid #5f6479;box-sizing:border-box;border-radius:2.5px;"></div>
<div class="t" style="left:573.50px;top:364px;font-size:13.1px;color:#e4e6ea;letter-spacing:-0.1px;">Номер занят</div>
<div class="t" style="left:547.40px;top:397px;font-size:13.0px;color:#e4e6ea;letter-spacing:-0.093px;">Уникальный номер</div>
<div class="r" style="left:687px;top:393px;width:40px;height:20px;background:transparent;border:1.3px solid #a3a7b1;box-sizing:border-box;border-radius:10px;"></div>
<div class="r" style="left:690.8px;top:397px;width:12px;height:12px;background:#c3c5d3;border-radius:50%;"></div>
<svg class="r" style="left:0;top:0" width="1440" height="900" viewBox="0 0 1440 900">
<path d="M1404 187.2 L1408 181 L1412 187.2 Z" fill="#9a9dc0"/>
<path d="M1404 868 L1408 874 L1412 868 Z" fill="#9a9dc0"/>
<path d="M314.4 882.2 L308 886.2 L314.4 890 Z" fill="#9a9dc0"/>
<path d="M1390 882 L1396 886 L1390 890 Z" fill="#9a9dc0"/>
</svg>
<div class="r" style="left:1406px;top:203px;width:4px;height:380px;background:#464d55;"></div>
<div class="r" style="left:328px;top:884px;width:307px;height:4px;background:#464d55;"></div>
<div class="r" style="left:0px;top:896px;width:1440px;height:4px;background:#394555;"></div>
</body></html>
